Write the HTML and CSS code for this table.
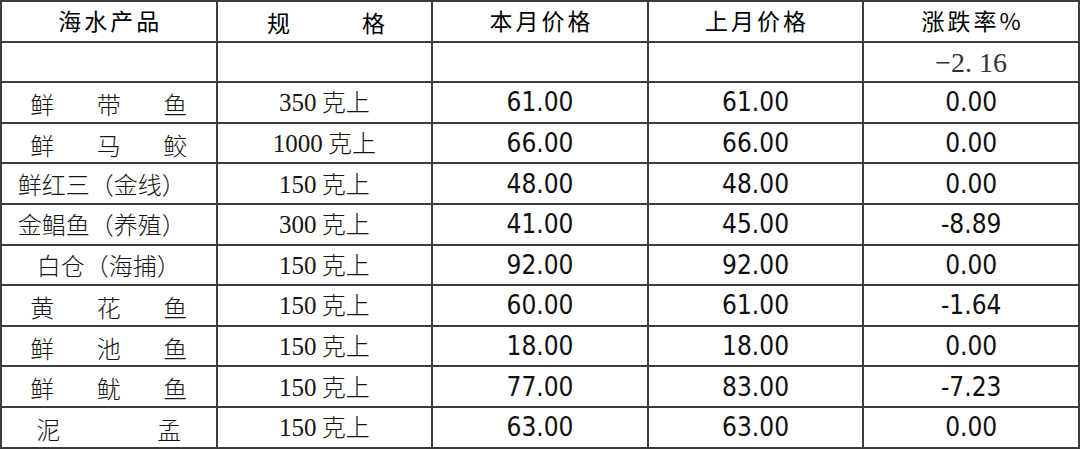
FILE: index.html
```html
<!DOCTYPE html>
<html lang="zh-CN">
<head>
<meta charset="utf-8">
<title>海水产品价格</title>
<link rel="stylesheet" href="styles.css">
</head>
<body>
<table class="price-table">
  <colgroup>
    <col class="col"><col class="col"><col class="col"><col class="col"><col class="col">
  </colgroup>
  <thead>
    <tr>
      <th>海水产品</th>
      <th><span class="spread spread-head"><span>规</span><span>格</span></span></th>
      <th>本月价格</th>
      <th>上月价格</th>
      <th>涨跌率%</th>
    </tr>
  </thead>
  <tbody>
    <tr>
      <td></td><td></td><td></td><td></td>
      <td class="total">−2. 16</td>
    </tr>
    <tr>
      <td class="name"><span class="spread"><span>鲜</span><span>带</span><span>鱼</span></span></td>
      <td class="spec"><span class="num">350</span> 克上</td>
      <td class="price">61.00</td><td class="price">61.00</td><td class="price">0.00</td>
    </tr>
    <tr>
      <td class="name"><span class="spread"><span>鲜</span><span>马</span><span>鲛</span></span></td>
      <td class="spec"><span class="num">1000</span> 克上</td>
      <td class="price">66.00</td><td class="price">66.00</td><td class="price">0.00</td>
    </tr>
    <tr>
      <td class="name name-left">鲜红三（金线）</td>
      <td class="spec"><span class="num">150</span> 克上</td>
      <td class="price">48.00</td><td class="price">48.00</td><td class="price">0.00</td>
    </tr>
    <tr>
      <td class="name name-left">金鲳鱼（养殖）</td>
      <td class="spec"><span class="num">300</span> 克上</td>
      <td class="price">41.00</td><td class="price">45.00</td><td class="price">-8.89</td>
    </tr>
    <tr>
      <td class="name">白仓（海捕）</td>
      <td class="spec"><span class="num">150</span> 克上</td>
      <td class="price">92.00</td><td class="price">92.00</td><td class="price">0.00</td>
    </tr>
    <tr>
      <td class="name"><span class="spread"><span>黄</span><span>花</span><span>鱼</span></span></td>
      <td class="spec"><span class="num">150</span> 克上</td>
      <td class="price">60.00</td><td class="price">61.00</td><td class="price">-1.64</td>
    </tr>
    <tr>
      <td class="name"><span class="spread"><span>鲜</span><span>池</span><span>鱼</span></span></td>
      <td class="spec"><span class="num">150</span> 克上</td>
      <td class="price">18.00</td><td class="price">18.00</td><td class="price">0.00</td>
    </tr>
    <tr>
      <td class="name"><span class="spread"><span>鲜</span><span>鱿</span><span>鱼</span></span></td>
      <td class="spec"><span class="num">150</span> 克上</td>
      <td class="price">77.00</td><td class="price">83.00</td><td class="price">-7.23</td>
    </tr>
    <tr>
      <td class="name"><span class="spread spread-narrow"><span>泥</span><span>孟</span></span></td>
      <td class="spec"><span class="num">150</span> 克上</td>
      <td class="price">63.00</td><td class="price">63.00</td><td class="price">0.00</td>
    </tr>
  </tbody>
</table>
</body>
</html>
```

FILE: styles.css
```css
html, body {
  margin: 0;
  padding: 0;
  background: #ffffff;
}

body {
  width: 1080px;
  height: 450px;
  overflow: hidden;
  color: #141414;
  font-family: "Noto Sans CJK SC", sans-serif;
}

.price-table {
  width: 1080px;
  border-collapse: collapse;
  table-layout: fixed;
  border: 2px solid #555555;
}

.col {
  width: 20%;
}

.price-table tr {
  height: 40.6px;
}

.price-table th,
.price-table td {
  padding: 0;
  border: 2px solid #3c3c3c;
  text-align: center;
  vertical-align: middle;
  line-height: 30px;
  white-space: nowrap;
  overflow: visible;
}

.price-table th {
  font-family: "Noto Sans CJK SC", sans-serif;
  font-weight: 400;
  font-size: 23px;
  letter-spacing: 3px;
  padding-left: 3px;
  padding-bottom: 3px;
  color: #000000;
}

.spread {
  display: inline-flex;
  justify-content: space-between;
  width: 157px;
  vertical-align: middle;
}

.spread-head {
  width: 118px;
  letter-spacing: 0;
}

.spread-narrow {
  width: 145px;
}

.name {
  font-family: "Noto Sans CJK SC", sans-serif;
  font-weight: 300;
  font-size: 24px;
}

.name-left {
  padding-right: 14px !important;
}

.spec {
  font-family: "Noto Sans CJK SC", sans-serif;
  font-weight: 300;
  font-size: 24px;
}

.spec .num {
  font-family: "Liberation Serif", serif;
  font-size: 25px;
}

.price {
  font-family: "DejaVu Sans Condensed", "DejaVu Sans", sans-serif;
  font-stretch: condensed;
  font-size: 26px;
  color: #0f0f0f;
}

.total {
  font-family: "Liberation Serif", serif;
  font-size: 28px;
  color: #333333;
  padding-top: 2px !important;
}
```
